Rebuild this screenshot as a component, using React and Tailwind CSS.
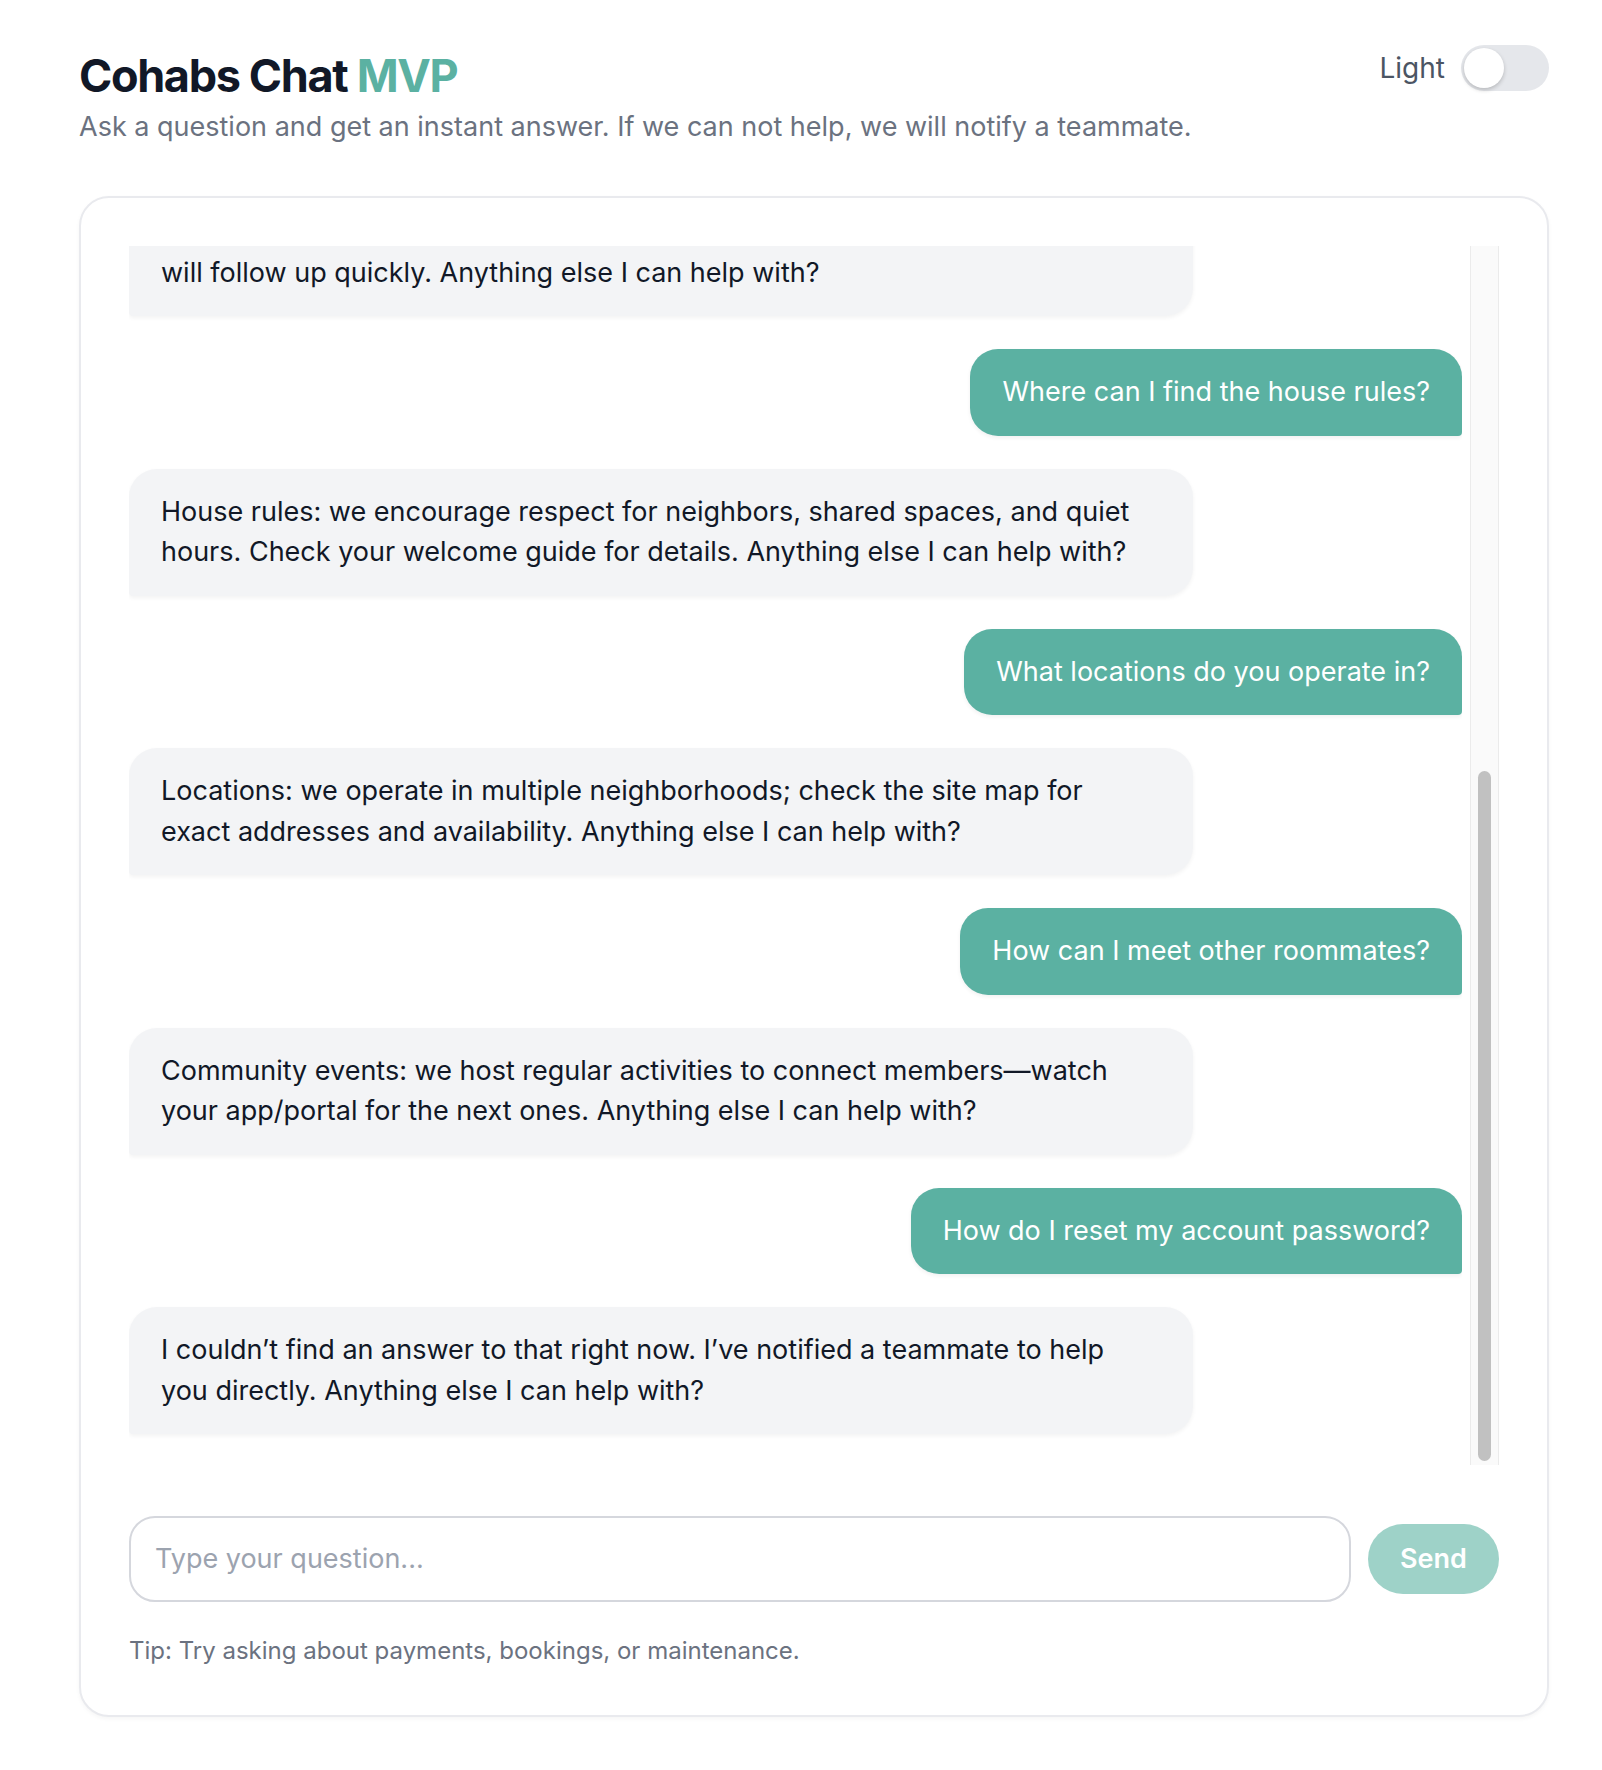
import React from "react";

const font = { fontFamily: 'Inter, "Noto Sans", "Liberation Sans", sans-serif' };

function BotBubble({ lines, top = "pt-[23px]" }) {
  return (
    <div className="flex shrink-0 justify-start">
      <div className={"w-[1064px] rounded-[28px] rounded-bl-[4px] bg-[#f3f4f6] px-[32px] pb-[23px] text-[27px] leading-[40.5px] text-[#111827] shadow-[0_2px_4px_rgba(0,0,0,0.05)] " + top}>
        {lines.map((l, i) => (
          <span key={i} className="block whitespace-nowrap">{l}</span>
        ))}
      </div>
    </div>
  );
}

function UserBubble({ text }) {
  return (
    <div className="flex shrink-0 justify-end">
      <div className="rounded-[28px] rounded-br-[4px] bg-[#5bb1a2] px-[32px] py-[23px] text-[27px] leading-[40.5px] text-white whitespace-nowrap shadow-[0_2px_4px_rgba(0,0,0,0.06)]">
        {text}
      </div>
    </div>
  );
}

export default function App() {
  return (
    <div className="min-h-screen bg-white" style={font}>
      <div className="ml-[79px] w-[1470px] pt-[45px] pb-[55px]">
        <div className="flex items-start justify-between gap-[24px]">
          <div className="min-w-0 flex-1 pt-[5px]">
            <h1 className="text-[45px] font-bold leading-[52px] tracking-[-0.03em] text-[#111827]">
              Cohabs Chat <span className="text-[#5bb1a2]">MVP</span>
            </h1>
            <p className="mt-[7px] text-[27px] leading-[36px] text-[#6b7280]">
              Ask a question and get an instant answer. If we can not help, we will notify a teammate.
            </p>
          </div>
          <div className="flex shrink-0 items-center gap-[16px]">
            <span className="text-[28px] leading-[36px] text-[#4b5563]">Light</span>
            <div className="flex h-[46px] w-[88px] items-center rounded-full bg-[#e5e7eb] px-[3px]">
              <div className="h-[40px] w-[40px] rounded-full bg-white shadow-[0_2px_4px_rgba(0,0,0,0.2)]"></div>
            </div>
          </div>
        </div>

        <div className="mt-[51px] rounded-[30px] border-2 border-[#e9eaee] bg-white p-[48px] shadow-[0_2px_4px_rgba(0,0,0,0.04)]">
          <div className="flex h-[1219px] gap-[8px]">
            <div className="flex flex-1 flex-col justify-end gap-[33px] overflow-hidden pb-[31px]">
              <BotBubble
                top="pt-[80px]"
                lines={["will follow up quickly. Anything else I can help with?"]}
              />
              <UserBubble text="Where can I find the house rules?" />
              <BotBubble
                lines={[
                  "House rules: we encourage respect for neighbors, shared spaces, and quiet",
                  "hours. Check your welcome guide for details. Anything else I can help with?",
                ]}
              />
              <UserBubble text="What locations do you operate in?" />
              <BotBubble
                lines={[
                  "Locations: we operate in multiple neighborhoods; check the site map for",
                  "exact addresses and availability. Anything else I can help with?",
                ]}
              />
              <UserBubble text="How can I meet other roommates?" />
              <BotBubble
                lines={[
                  "Community events: we host regular activities to connect members\u2014watch",
                  "your app/portal for the next ones. Anything else I can help with?",
                ]}
              />
              <UserBubble text="How do I reset my account password?" />
              <BotBubble
                lines={[
                  "I couldn\u2019t find an answer to that right now. I\u2019ve notified a teammate to help",
                  "you directly. Anything else I can help with?",
                ]}
              />
            </div>
            <div className="flex h-[1219px] w-[29px] shrink-0 flex-col border-x border-[#ebebeb] bg-[#fafafa] px-[7px] pb-[4px] pt-[525px]">
              <div className="flex-1 rounded-full bg-[#c1c1c1]"></div>
            </div>
          </div>

          <div className="mt-[51px] flex items-center gap-[17px]">
            <div className="flex h-[86px] flex-1 items-center rounded-[26px] border-2 border-[#d5d7dd] px-[24px]">
              <span className="text-[27px] text-[#9ca3af]">Type your question...</span>
            </div>
            <div className="flex h-[70px] w-[131px] items-center justify-center rounded-full bg-[#9ed2c8] text-[27px] font-semibold text-white">
              Send
            </div>
          </div>

          <p className="mt-[33px] text-[24px] leading-[32px] text-[#6b7280]">
            Tip: Try asking about payments, bookings, or maintenance.
          </p>
        </div>
      </div>
    </div>
  );
}
